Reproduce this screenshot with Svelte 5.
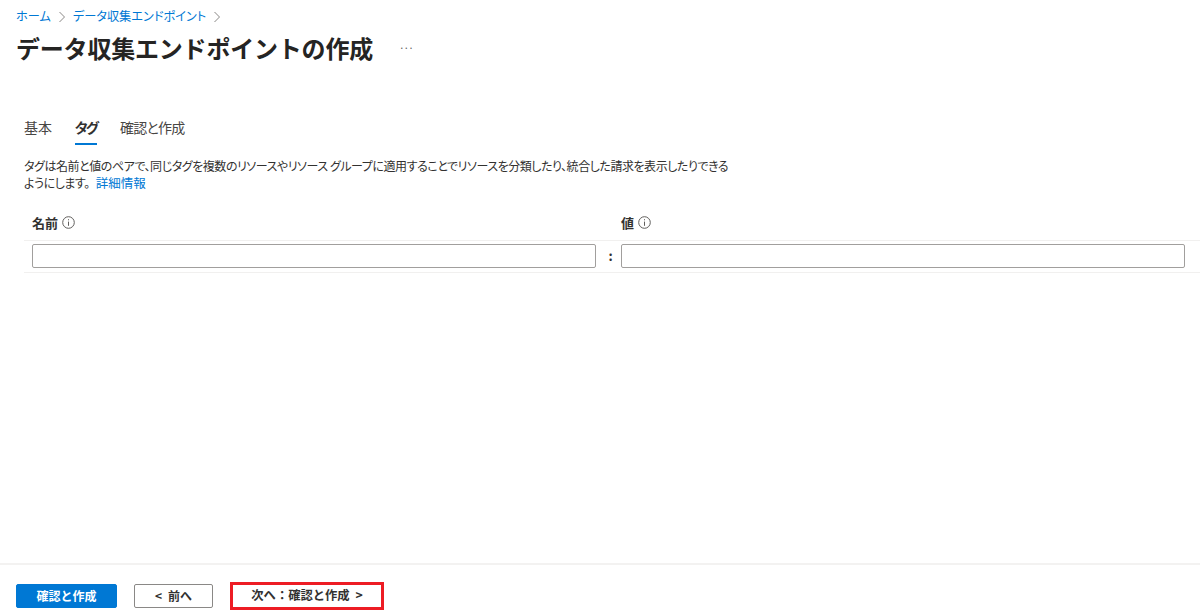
<script>
	const tabs = [
		{ label: '基本' },
		{ label: 'タグ', active: true },
		{ label: '確認と作成' }
	];
</script>

<div class="page">
	<div class="top">
		<nav class="crumbs">
			<a href="#home">ホーム</a>
			<svg class="chev" width="8" height="12" viewBox="0 0 8 12"><path d="M1.5 1 L6.5 6 L1.5 11" /></svg>
			<a href="#dce">データ収集エンドポイント</a>
			<svg class="chev" width="8" height="12" viewBox="0 0 8 12"><path d="M1.5 1 L6.5 6 L1.5 11" /></svg>
		</nav>
		<div class="title-row">
			<h1>データ収集エンドポイントの作成</h1>
			<span class="more">···</span>
		</div>

		<div class="tabs">
			{#each tabs as tab}
				<div class="tab" class:active={tab.active}>{tab.label}</div>
			{/each}
		</div>

		<p class="desc">
			タグは名前と値のペアで、同じタグを複数のリソースやリソース グループに適用することでリソースを分類したり、統合した請求を表示したりできる<br />ようにします。<a href="#more">詳細情報</a>
		</p>

		<div class="grid head">
			<div class="label">名前
				<svg class="info" width="13" height="13" viewBox="0 0 13 13"><circle cx="6.5" cy="6.5" r="5.8" /><path d="M6.5 5.6 V9.8 M6.5 3.2 V4.3" /></svg>
			</div>
			<div></div>
			<div class="label">値
				<svg class="info" width="13" height="13" viewBox="0 0 13 13"><circle cx="6.5" cy="6.5" r="5.8" /><path d="M6.5 5.6 V9.8 M6.5 3.2 V4.3" /></svg>
			</div>
		</div>
		<div class="grid inputs">
			<input type="text" />
			<div class="colon">:</div>
			<input type="text" />
		</div>
	</div>

	<footer>
		<button class="primary">確認と作成</button>
		<button class="prev">&lt; 前へ</button>
		<button class="next">次へ：確認と作成 &gt;</button>
	</footer>
</div>

<style>
	:global(body) {
		background: #fff;
	}

	.page {
		width: 1200px;
		height: 614px;
		display: flex;
		flex-direction: column;
		justify-content: space-between;
		font-family: 'Noto Sans CJK JP', 'Noto Sans', sans-serif;
		font-feature-settings: 'palt';
		color: #323130;
		overflow: hidden;
	}

	.top {
		display: flex;
		flex-direction: column;
	}

	.crumbs {
		display: flex;
		align-items: center;
		gap: 7px;
		padding: 7px 0 0 16px;
		height: 19px;
		font-size: 12.2px;
		line-height: 19px;
	}

	a {
		color: #0078d4;
		text-decoration: none;
	}

	.chev {
		fill: none;
		stroke: #8a8886;
		stroke-width: 1;
	}

	.title-row {
		display: flex;
		align-items: center;
		padding: 3px 0 0 16px;
		height: 38px;
	}

	h1 {
		margin: 0;
		font-size: 24px;
		font-weight: 700;
		font-feature-settings: normal;
		letter-spacing: -0.2px;
		line-height: 38px;
		color: #252423;
	}

	.more {
		margin-left: 26px;
		font-size: 10px;
		letter-spacing: -1px;
		color: #605e5c;
		line-height: 14px;
	}

	.tabs {
		display: flex;
		gap: 23px;
		margin: 47px 0 0 24px;
		height: 43px;
	}

	.tab {
		font-size: 14px;
		line-height: 27px;
		height: 29px;
		color: #484644;
	}

	.tab:last-child {
		letter-spacing: -0.8px;
	}

	.tab.active {
		font-weight: 700;
		color: #323130;
		border-bottom: 2px solid #0078d4;
		height: 29px;
		letter-spacing: -2px;
	}

	.desc {
		margin: 0 0 0 24px;
		font-size: 12px;
		line-height: 17px;
		width: 730px;
		white-space: nowrap;
		letter-spacing: -0.45px;
		color: #323130;
	}

	.desc a {
		font-size: 12.5px;
		letter-spacing: 0;
		margin-left: 6px;
	}

	.grid {
		display: grid;
		grid-template-columns: 564px 25px 564px;
		margin-left: 24px;
		padding-left: 8px;
		border-bottom: 1px solid #f1f0ef;
	}

	.head {
		margin-top: 16px;
		height: 33px;
		align-items: center;
	}

	.label {
		font-size: 13px;
		font-weight: 700;
		display: flex;
		align-items: center;
		gap: 4px;
		height: 28px;
		margin-top: -3px;
	}

	.info {
		fill: none;
		stroke: #605e5c;
		stroke-width: 1;
	}

	.inputs {
		height: 28px;
		padding-top: 3px;
		align-items: start;
	}

	input {
		box-sizing: border-box;
		height: 24px;
		width: 100%;
		border: 1px solid #a19f9d;
		border-radius: 2px;
		background: #fff;
		margin: 0;
	}

	.colon {
		text-align: center;
		font-size: 13px;
		font-weight: 700;
		line-height: 24px;
		padding-left: 4px;
	}

	footer {
		display: flex;
		align-items: flex-start;
		gap: 17px;
		box-sizing: border-box;
		padding: 19px 0 0 16px;
		border-top: 2px solid #f3f2f1;
		height: 51px;
	}

	button {
		font-family: inherit;
		font-feature-settings: normal;
		font-size: 12px;
		font-weight: 700;
		height: 24px;
		border-radius: 2px;
		padding: 0 0 1px;
		margin: 0;
		background: #fff;
		color: #323130;
		border: 1px solid #8a8886;
		word-spacing: 3px;
	}

	.primary {
		width: 101px;
		background: #0078d4;
		border-color: #0078d4;
		color: #fff;
	}

	.prev {
		width: 79px;
	}

	.next {
		width: 154px;
		height: 28px;
		margin-top: -2px;
		padding: 0 0 3px;
		font-size: 12.3px;
		border: 3px solid #ed1c24;
		border-radius: 0;
	}
</style>
